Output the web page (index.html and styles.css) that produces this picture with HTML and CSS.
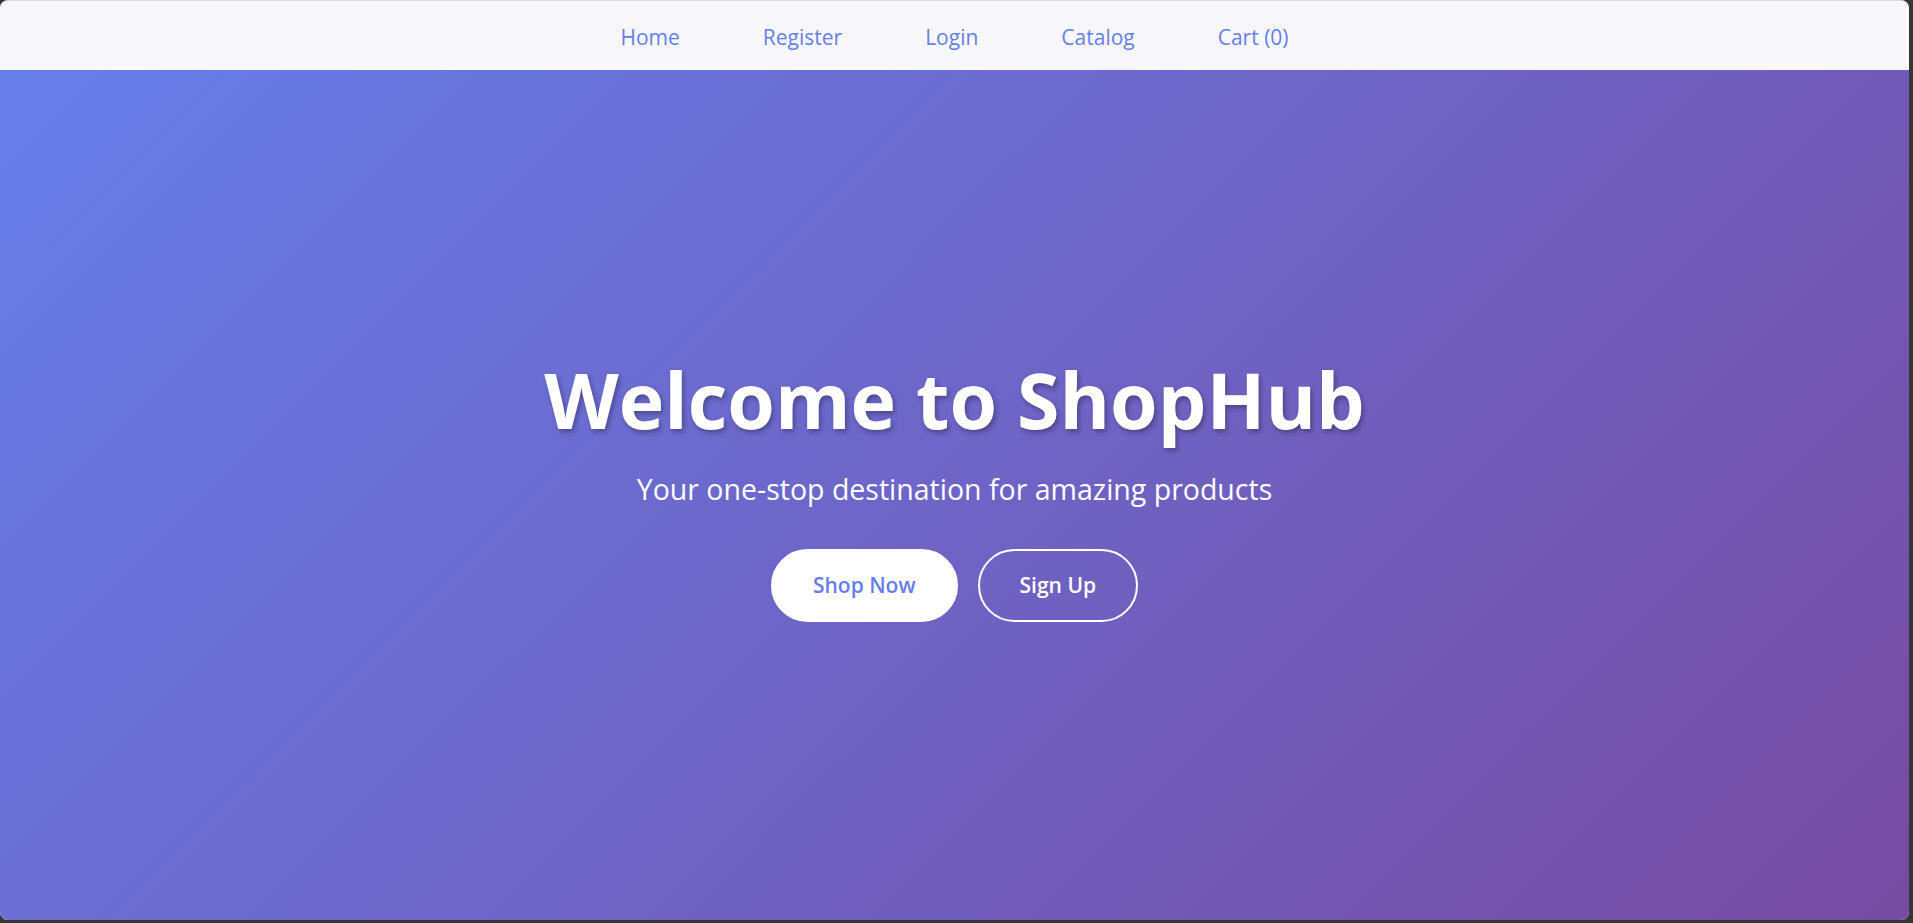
FILE: index.html
```html
<!DOCTYPE html>
<html lang="en">
<head>
<meta charset="utf-8">
<title>ShopHub</title>
<link rel="stylesheet" href="styles.css">
</head>
<body>
<div class="window">
  <nav class="navbar">
    <a class="nav-link" href="#">Home</a>
    <a class="nav-link" href="#">Register</a>
    <a class="nav-link" href="#">Login</a>
    <a class="nav-link" href="#">Catalog</a>
    <a class="nav-link" href="#">Cart (0)</a>
  </nav>
  <main class="hero">
    <h1 class="hero-title">Welcome to ShopHub</h1>
    <p class="hero-subtitle">Your one-stop destination for amazing products</p>
    <div class="hero-actions">
      <a class="btn btn-primary" href="#">Shop Now</a>
      <a class="btn btn-outline" href="#">Sign Up</a>
    </div>
  </main>
</div>
</body>
</html>
```

FILE: styles.css
```css
* { box-sizing: border-box; }
html, body { height: 100%; }
body {
  margin: 0;
  background: #363636;
  font-family: "Open Sans", "Noto Sans", sans-serif;
  padding: 0 4px 3px 0;
}
.window {
  height: 100%;
  display: flex;
  flex-direction: column;
  border-radius: 8px;
  overflow: hidden;
  border-top: 1px solid #d9d9de;
  background: #f8f8fc;
}
.navbar {
  height: 69px;
  flex: none;
  display: flex;
  justify-content: center;
  align-items: center;
  gap: 83px;
  background: #f8f8fc;
  padding-top: 3px;
}
.nav-link {
  color: #667eea;
  text-decoration: none;
  font-size: 21px;
  font-weight: 500;
}
.hero {
  flex: 1;
  display: flex;
  flex-direction: column;
  align-items: center;
  justify-content: center;
  background: linear-gradient(135deg, #667eea 0%, #764ba2 100%);
  color: #fff;
  text-align: center;
  padding-bottom: 14px;
}
.hero-title {
  margin: 0;
  font-size: 77px;
  font-weight: 700;
  line-height: 1.2;
  text-shadow: 2px 3px 5px rgba(0, 0, 0, 0.3);
}
.hero-subtitle {
  margin: 25px 0 41px;
  font-size: 28.5px;
  line-height: 1.3;
}
.hero-actions {
  display: flex;
  gap: 20px;
}
.btn {
  display: inline-block;
  padding: 20px 40px;
  border-radius: 40px;
  border: 2px solid #fff;
  font-size: 21px;
  font-weight: 600;
  line-height: 29px;
  text-decoration: none;
}
.btn-primary {
  background: #fff;
  color: #667eea;
}
.btn-outline {
  background: transparent;
  color: #fff;
}
```
